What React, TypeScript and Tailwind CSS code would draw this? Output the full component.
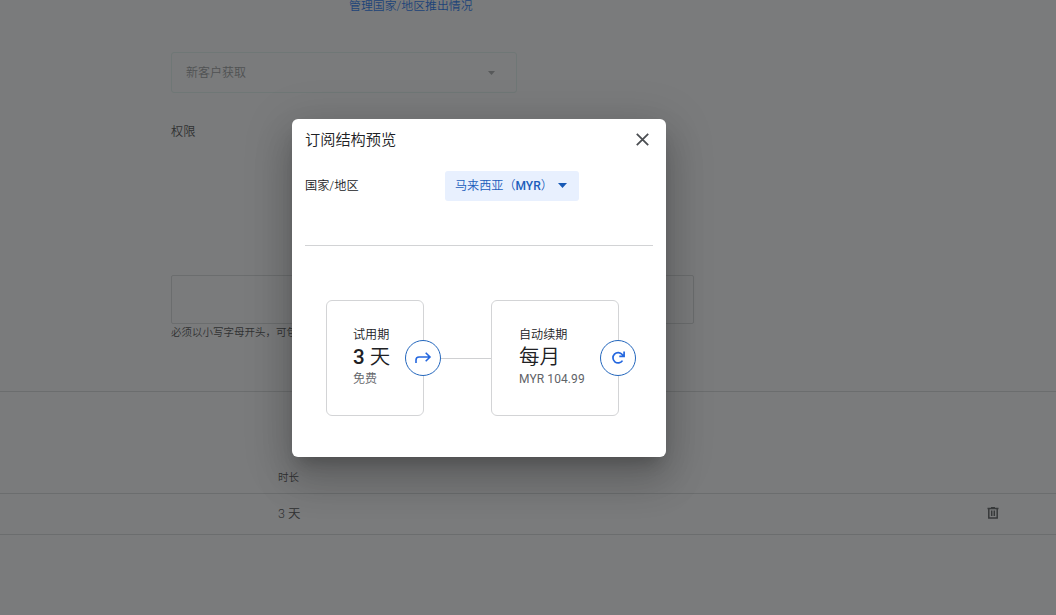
import type { ReactNode } from 'react';

function DeleteIcon() {
  return (
    <svg className="h-3 w-3" viewBox="0 0 12 12" fill="none" stroke="#37393a" strokeWidth="1.5">
      <path d="M.5 1.5h11M4 .8h4M1.8 1.5v9.5h8.4V1.5M4.7 3.5v5.5M7.3 3.5v5.5" />
    </svg>
  );
}

function StageCard({ title, value, note, width, icon }: { title: string; value: ReactNode; note: ReactNode; width: string; icon: ReactNode }) {
  return (
    <div className={`relative flex h-[116px] flex-col rounded-[6px] border border-[#d3d4d6] pt-[24px] ${width}`}>
      <div className="h-[20px] text-[12.1px] leading-[20px] text-[#202124]">{title}</div>
      <div className="h-[24px] text-[20.5px] leading-[24px] text-[#202124]">{value}</div>
      <div className="h-[20px] text-[12px] leading-[20px] text-[#5f6368]">{note}</div>
      <div className="absolute -right-[18px] top-[39px] flex h-9 w-9 items-center justify-center rounded-full border border-[#2467bd] bg-white">
        {icon}
      </div>
    </div>
  );
}

function Page() {
  return (
    <main className="flex h-[615px] flex-col overflow-hidden bg-[#7a7b7c] text-[#303132]">
      <div className="h-[52px] pl-[349px]">
        <a className="block h-[12px] text-[11.9px] leading-[12px] text-[#1c4379]">管理国家/地区推出情况</a>
      </div>
      <div className="ml-[171px] flex h-[41px] w-[346px] shrink-0 items-center justify-between rounded-[3px] border border-[#6f7776] pl-[14px] pr-[21px]">
        <span className="text-[12px] text-[#505253]">新客户获取</span>
        <svg className="h-1 w-[7px]" viewBox="0 0 7 4"><path d="M0 0h7L3.5 4z" fill="#57595a" /></svg>
      </div>
      <div className="ml-[171px] mt-[29px] h-[20px] shrink-0 text-[12.2px] leading-[20px]">权限</div>
      <div className="ml-[171px] mt-[133px] h-[49px] w-[523px] shrink-0 rounded-[2px] border border-[#6b6d6e]" />
      <p className="ml-[171px] h-[17px] shrink-0 text-[10.5px] leading-[17px] text-[#303132]">必须以小写字母开头，可包含数字</p>
      <section className="mt-[50px] border-t border-[#6b6d6e]">
        <div className="flex h-[102px] items-end border-b border-[#6b6d6e] pb-[7px] pl-[278px] text-[10.5px] leading-[16px] text-[#303132]">时长</div>
        <div className="flex h-[41px] items-center justify-between border-b border-[#6b6d6e] pl-[278px] pr-[57px] text-[12.5px]">
          <span className="pt-px">3 天</span>
          <span className="pb-[2px]"><DeleteIcon /></span>
        </div>
      </section>
    </main>
  );
}

function PreviewDialog() {
  return (
    <div role="dialog" className="absolute left-[292px] top-[119px] flex h-[338px] w-[374px] flex-col rounded-[6px] bg-white px-[13px] text-[#202124] shadow-[0_11px_15px_-7px_rgba(0,0,0,0.2),0_24px_38px_3px_rgba(0,0,0,0.14),0_9px_46px_8px_rgba(0,0,0,0.12)]">
      <header className="flex h-[40px] items-center justify-between pr-[4px]">
        <h1 className="pt-px text-[15.2px] leading-[20px] font-[350]">订阅结构预览</h1>
        <button aria-label="关闭">
          <svg className="h-[13px] w-[13px]" viewBox="0 0 13 13" fill="none" stroke="#4b4e52" strokeWidth="1.8"><path d="m.8.8 11.4 11.4M12.2.8.8 12.2" /></svg>
        </button>
      </header>
      <div className="mt-[12px] flex h-[30px] items-center">
        <span className="w-[140px] text-[12.2px] leading-[20px]">国家/地区</span>
        <button className="flex h-[30px] w-[134px] items-center justify-between rounded-[3px] bg-[#e8f0fe] pb-px pl-[10px] pr-[12px] text-[12.1px] text-[#1b5dbb]">
          <span className="whitespace-nowrap pt-px">马来西亚（<span className="text-[12px] font-medium">MYR</span>）</span>
          <svg className="h-[5px] w-[9px] shrink-0" viewBox="0 0 9 5"><path d="M0 0h9L4.5 5z" fill="#1759b5" /></svg>
        </button>
      </div>
      <div className="mt-[44px] h-px bg-[#d2d3d5]" />
      <div className="ml-[21px] mt-[54px] flex items-center">
        <StageCard
          title="试用期"
          value={<><span className="font-medium">3</span> 天</>}
          note="免费"
          width="w-[98px] pl-[26px]"
          icon={<svg className="h-4 w-[18px]" viewBox="0 0 18 16" fill="none" stroke="#2467df" strokeWidth="1.6"><path d="M2 13V10Q2 7 5 7h11M11.7 2.7 16 7l-4.3 4.3" /></svg>}
        />
        <div className="h-px w-[67px] bg-[#cfd0d2]" />
        <StageCard
          title="自动续期"
          value="每月"
          note={<span className="text-[12px] font-normal tracking-[0.1px]">MYR 104.99</span>}
          width="w-[128px] pl-[27px]"
          icon={<svg className="h-4 w-4" viewBox="0 0 16 16" fill="none" stroke="#2467df" strokeWidth="1.7"><path d="M12.5 10.6A5.2 5.2 0 1 1 12.2 4.5L13.8 6.2M14.1 1.5v4.9H9.3" /></svg>}
        />
      </div>
    </div>
  );
}

export default function App() {
  return (
    <div className="relative h-[615px] w-[1056px] overflow-hidden font-['Roboto','Noto_Sans_CJK_SC',sans-serif] font-[350]">
      <Page />
      <PreviewDialog />
    </div>
  );
}
